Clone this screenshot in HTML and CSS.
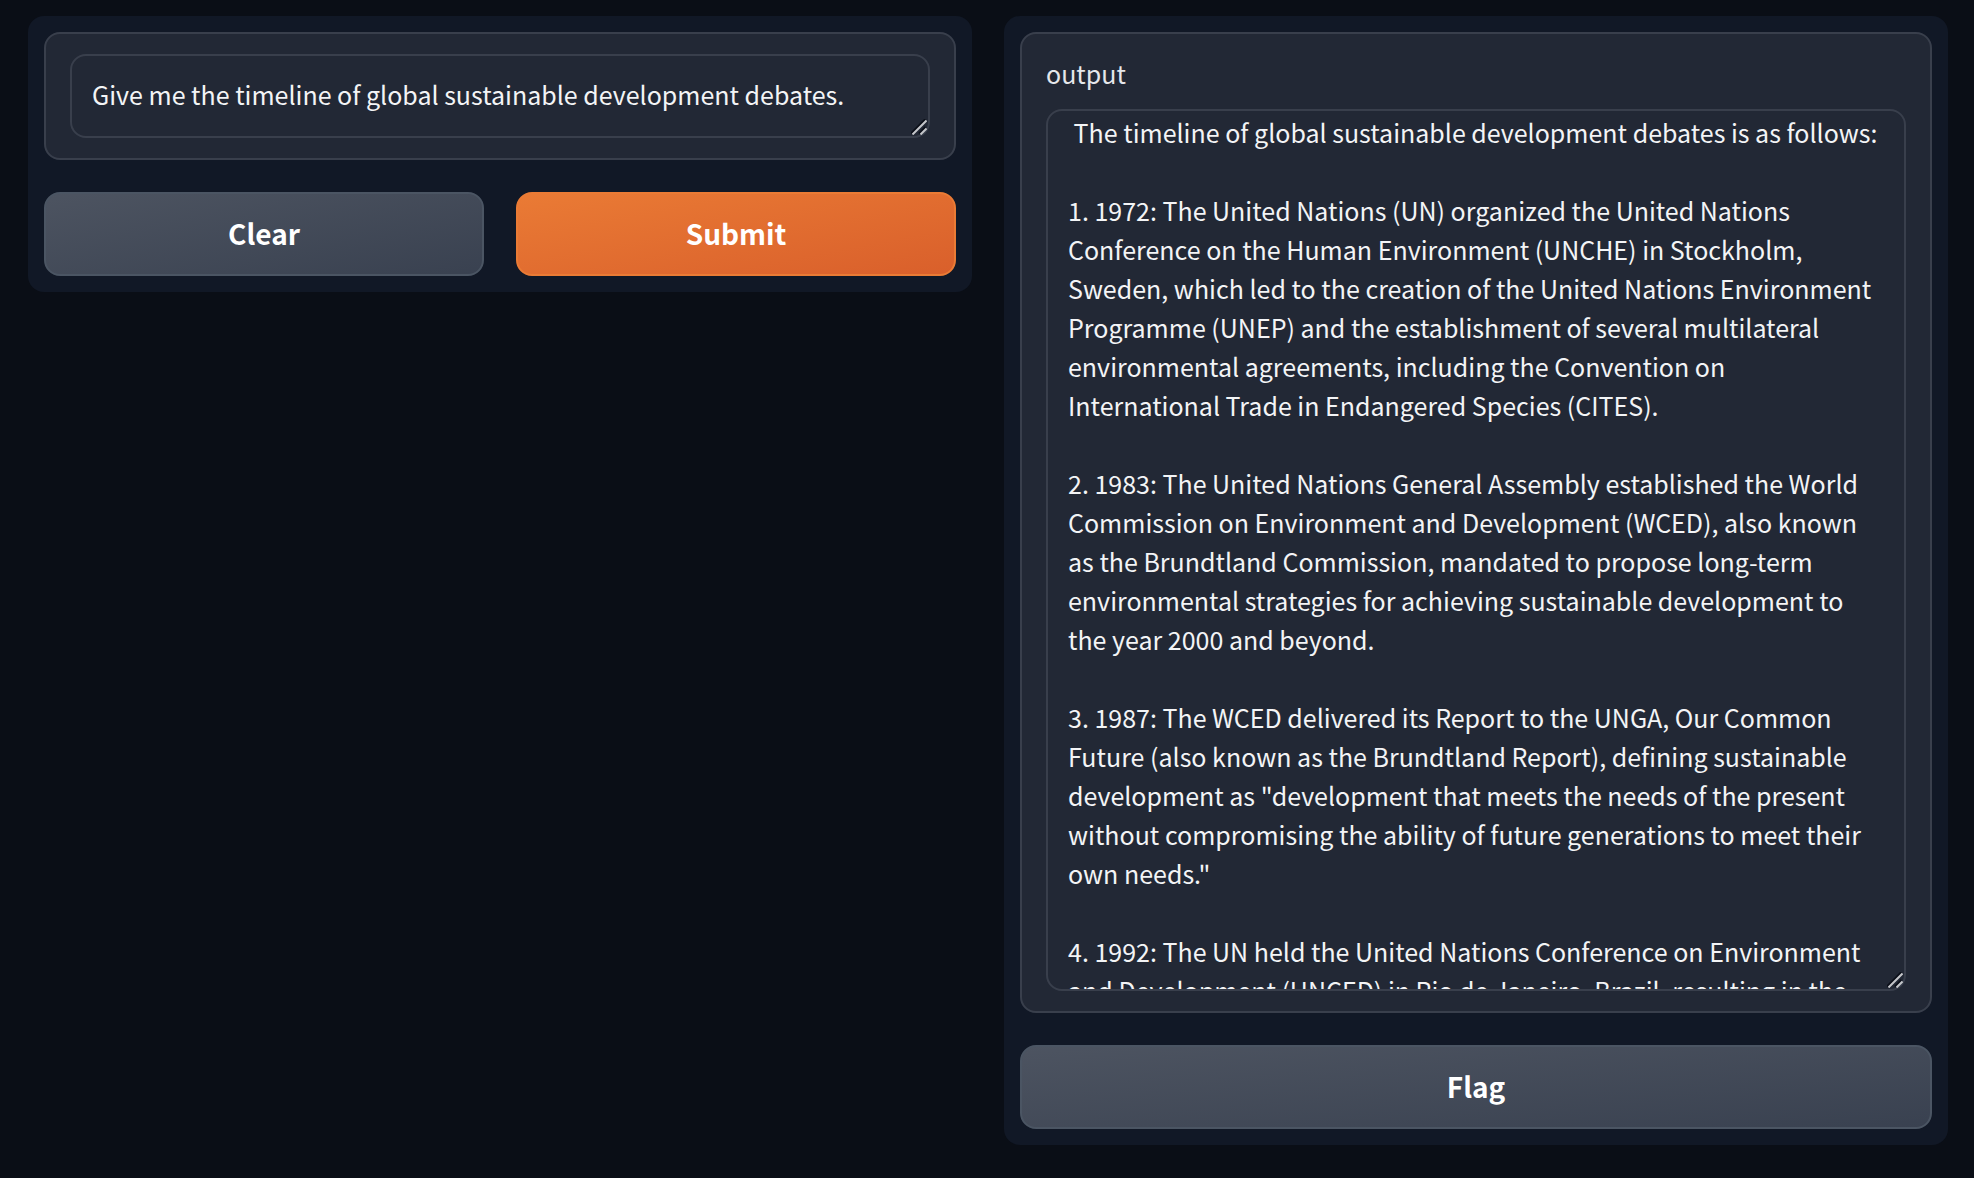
FILE: index.html
```html
<!DOCTYPE html>
<html lang="en">
<head>
<meta charset="utf-8">
<title>Question answering</title>
<link rel="stylesheet" href="styles.css">
</head>
<body>
<main class="interface">
  <form class="panel">
    <div class="block">
      <div class="field">
        <textarea class="textbox" rows="1" aria-label="Question">Give me the timeline of global sustainable development debates.</textarea>
        <svg class="grip" viewBox="0 0 16 16" aria-hidden="true"><path class="grip-shade" d="M0 14.500L14.500 0M8 14.500L14.500 8"/><path class="grip-line" d="M1.500 15.500L15.500 1.500M9.500 15.500L15.500 9.500"/></svg>
      </div>
    </div>
    <div class="actions">
      <button class="button" type="button">Clear</button>
      <button class="button button-primary" type="button">Submit</button>
    </div>
  </form>
  <section class="panel">
    <div class="block">
      <label class="label" for="output">output</label>
      <div class="field">
        <textarea class="textbox textbox-output" id="output" rows="22" readonly> The timeline of global sustainable development debates is as follows:

1. 1972: The United Nations (UN) organized the United Nations Conference on the Human Environment (UNCHE) in Stockholm, Sweden, which led to the creation of the United Nations Environment Programme (UNEP) and the establishment of several multilateral environmental agreements, including the Convention on International Trade in Endangered Species (CITES).

2. 1983: The United Nations General Assembly established the World Commission on Environment and Development (WCED), also known as the Brundtland Commission, mandated to propose long-term environmental strategies for achieving sustainable development to the year 2000 and beyond.

3. 1987: The WCED delivered its Report to the UNGA, Our Common Future (also known as the Brundtland Report), defining sustainable development as "development that meets the needs of the present without compromising the ability of future generations to meet their own needs."

4. 1992: The UN held the United Nations Conference on Environment and Development (UNCED) in Rio de Janeiro, Brazil, resulting in the</textarea>
        <svg class="grip" viewBox="0 0 16 16" aria-hidden="true"><path class="grip-shade" d="M0 14.500L14.500 0M8 14.500L14.500 8"/><path class="grip-line" d="M1.500 15.500L15.500 1.500M9.500 15.500L15.500 9.500"/></svg>
      </div>
    </div>
    <button class="button" type="button">Flag</button>
  </section>
</main>
</body>
</html>
```
FILE: styles.css
```css
* {
  box-sizing: border-box;
}

body {
  margin: 0;
  background: #0a0e16;
  color: #f3f4f6;
  font-family: "Source Sans Pro", "Noto Sans CJK SC", sans-serif;
  font-size: 25px;
  line-height: 39px;
}

.interface {
  display: grid;
  grid-template-columns: repeat(2, minmax(0, 1fr));
  align-items: start;
  gap: 32px;
  padding: 16px 26px 32px 28px;
}

.panel {
  display: flex;
  flex-direction: column;
  gap: 32px;
  padding: 16px;
  border-radius: 16px;
  background: #111826;
}

.block {
  padding: 20px 24px;
  border: 2px solid #393f4c;
  border-radius: 16px;
  background: #222835;
}

.label {
  display: block;
  margin-bottom: 16px;
  color: #e5e7eb;
}

.field {
  position: relative;
}

.textbox {
  display: block;
  width: 100%;
  min-height: 84px;
  margin: 0;
  padding: 19px 24px 20px 20px;
  overflow: hidden;
  border: 2px solid #393f4c;
  border-radius: 16px;
  background: #222835;
  color: inherit;
  font: inherit;
  resize: none;
}

.textbox-output {
  padding-top: 2px;
  padding-bottom: 18px;
}

.grip {
  position: absolute;
  right: 3px;
  bottom: 3px;
  width: 16px;
  height: 16px;
  fill: none;
  stroke-width: 2px;
}

.grip-shade {
  stroke: #0b0f19;
}

.grip-line {
  stroke: #c4c6ca;
}

.actions {
  display: flex;
  gap: 32px;
}

.button {
  flex: 1 1 0;
  min-height: 84px;
  padding: 14px 24px 16px;
  border: 2px solid #4b5563;
  border-radius: 16px;
  background: linear-gradient(to bottom right, #4d5461, #394150) border-box;
  color: #ffffff;
  font: inherit;
  font-size: 28px;
  font-weight: 700;
}

.button-primary {
  border-color: #ea7b35;
  background: linear-gradient(to bottom right, #ea7b35, #d95f2b) border-box;
}
```
